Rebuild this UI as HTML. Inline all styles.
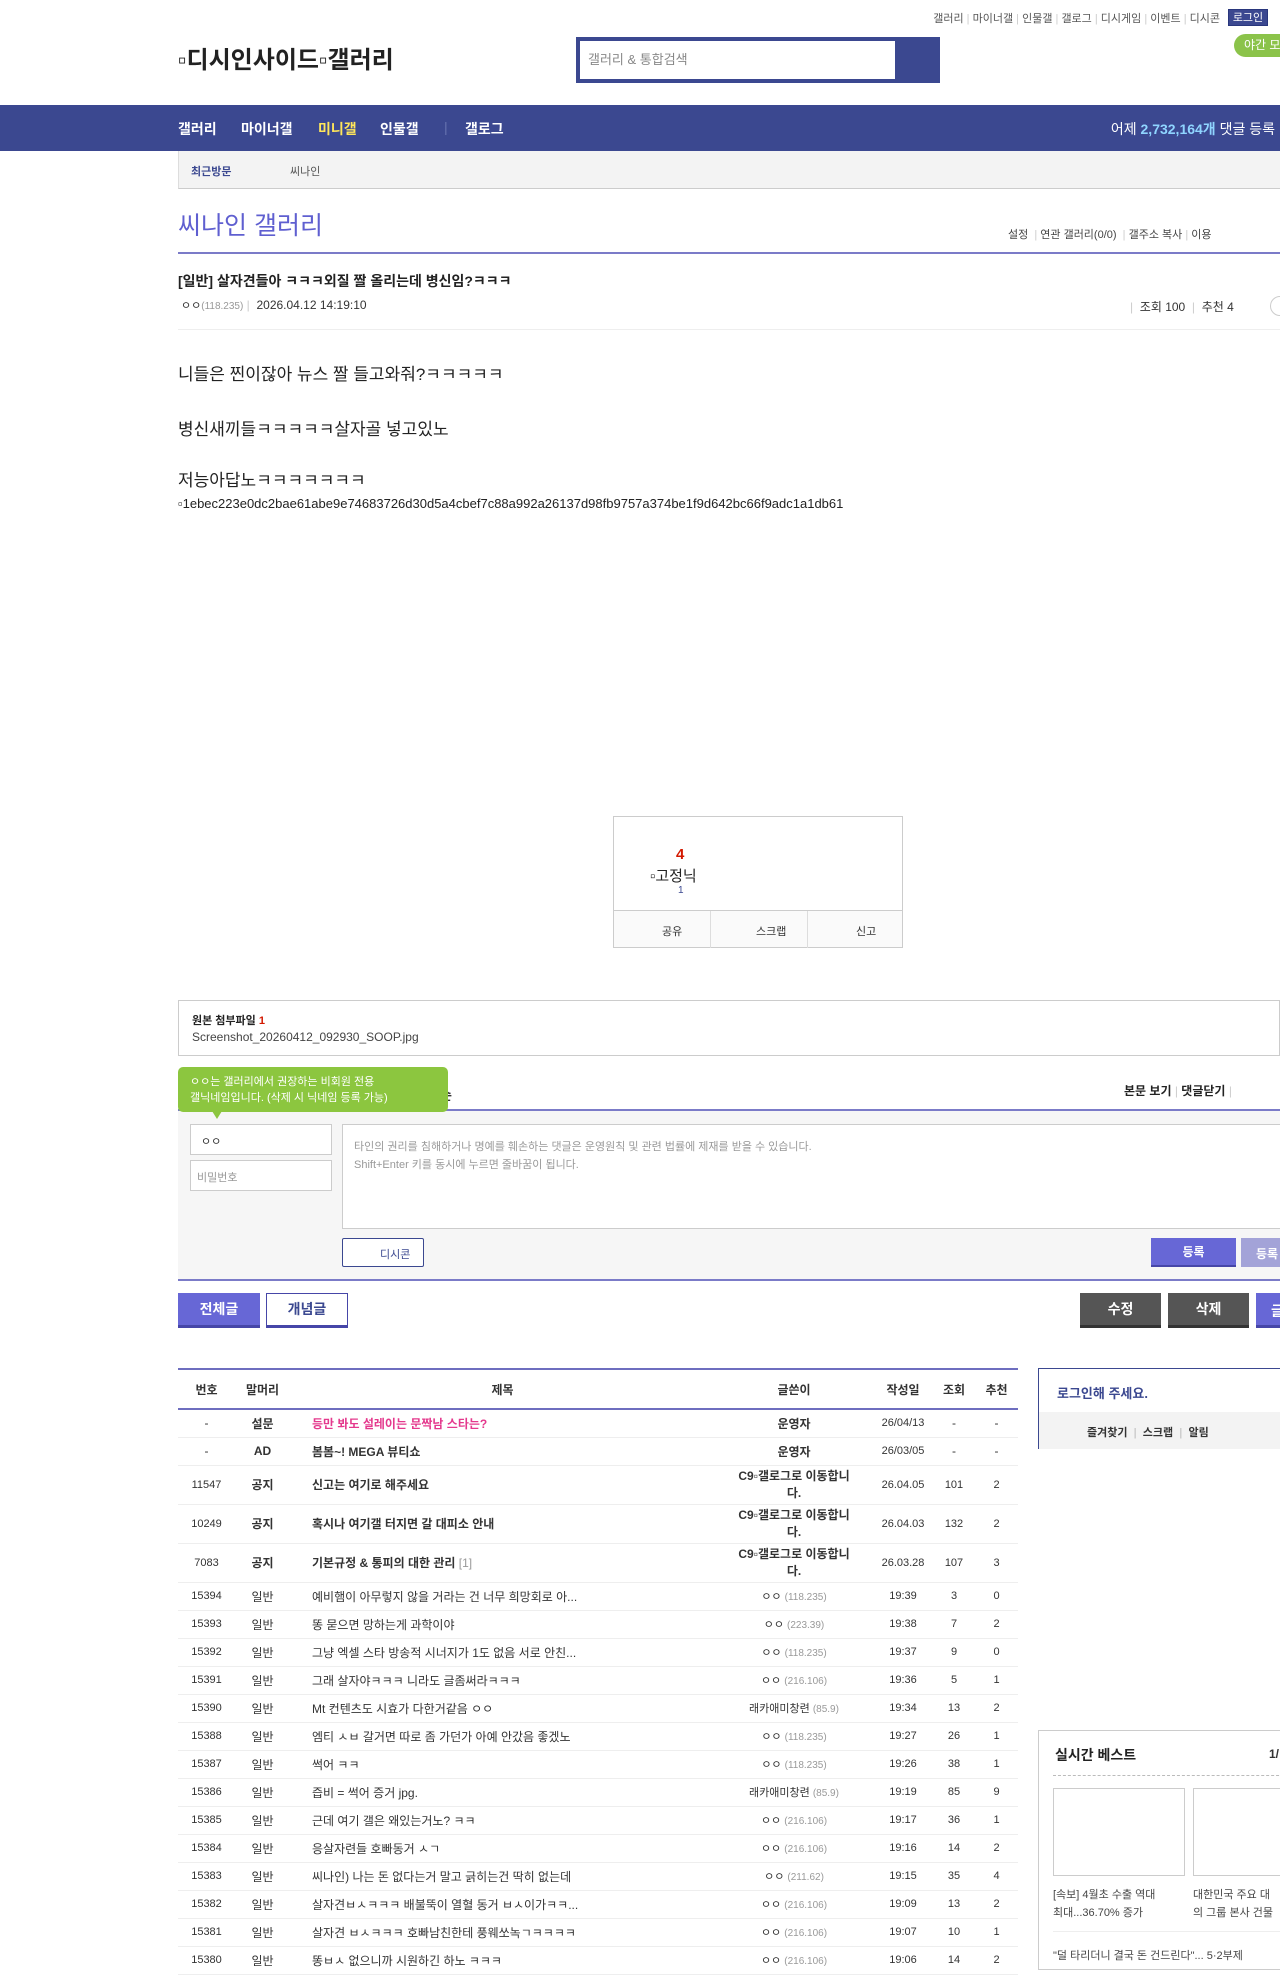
<!DOCTYPE html>
<html><head><meta charset="utf-8">
<style>
*{margin:0;padding:0;box-sizing:border-box}
body{width:1280px;height:1959px;overflow:hidden;background:#fff;font-family:"Liberation Sans","Noto Sans CJK KR",sans-serif;color:#333;position:relative;font-size:12px}
.a{position:absolute;white-space:nowrap}
.util{top:10px;right:60px;font-size:11px;color:#555}
.util i{font-style:normal;color:#ccc}
.login{top:9px;left:1228px;width:40px;height:17px;background:#3b4890;color:#fff;font-size:11px;text-align:center;line-height:17px;border:1px solid #29367c}
.night{top:34px;left:1234px;width:60px;height:23px;background:#8bc34a;border-radius:12px;color:#fff;font-size:12px;line-height:23px;padding-left:10px}
.logo{top:40px;left:178px;font-size:24px;font-weight:bold;color:#222}
.search{top:37px;left:576px;width:364px;height:46px;background:#3b4890}
.search div{position:absolute;left:4px;top:4px;width:315px;height:38px;background:#fff;color:#888;font-size:13px;line-height:38px;padding-left:8px}
.nav{top:105px;left:0;width:1280px;height:46px;background:#3b4890}
.nav span{position:absolute;top:14px;color:#fff;font-weight:bold;font-size:14px}
.sub{top:151px;left:178px;width:1102px;height:38px;background:#f3f3f3;border-bottom:1px solid #ccc;border-left:1px solid #ddd}
table{border-collapse:collapse;position:absolute;left:178px;top:1368px;width:840px;font-size:12px;table-layout:fixed}
td{text-align:center;border-bottom:1px solid #eee;height:28px;color:#333;overflow:hidden;white-space:nowrap}
td.t{text-align:left;padding-left:22px}
td.w{font-size:11px}
td.w small{color:#999;font-size:10px}
tr.n td{height:39px;font-weight:bold}
tr.n td.au{white-space:normal;line-height:17px;font-size:12px}
tr.h td{height:40px;font-weight:bold;border-bottom:2px solid #6e6ebf;border-top:2px solid #6e6ebf}
.b{font-weight:bold}
</style></head><body>
<div class="a util">갤러리<i> | </i>마이너갤<i> | </i>인물갤<i> | </i>갤로그<i> | </i>디시게임<i> | </i>이벤트<i> | </i>디시콘</div>
<div class="a login">로그인</div>
<div class="a night">야간 모드</div>
<div class="a logo">▫디시인사이드▫갤러리</div>
<div class="a search"><div>갤러리 &amp; 통합검색</div></div>
<div class="a nav">
<span style="left:178px">갤러리</span><span style="left:241px">마이너갤</span><span style="left:318px;color:#ffe65a">미니갤</span><span style="left:380px">인물갤</span><span style="left:444px;color:#6672b0;font-weight:normal">|</span><span style="left:465px">갤로그</span>
<span style="right:5px;font-weight:normal">어제 <b style="color:#8fd5ff">2,732,164개</b> 댓글 등록</span>
</div>
<div class="a sub"><span class="a" style="left:12px;top:12px;color:#3b4890;font-size:11px;font-weight:bold">최근방문</span><span class="a" style="left:111px;top:12px;font-size:11px;color:#555">씨나인</span></div>
<div class="a" style="top:206px;left:178px;font-size:25px;color:#5f5fd0">씨나인 갤러리</div>
<div class="a" style="top:226px;left:1008px;font-size:11px;color:#444">설정 &nbsp;<span style="color:#ccc">|</span> 연관 갤러리(0/0) &nbsp;<span style="color:#ccc">|</span> 갤주소 복사 <span style="color:#ccc">|</span> 이용</div>
<div class="a" style="top:252px;left:178px;width:1102px;height:2px;background:#7b7bc8"></div>
<div class="a b" style="top:271px;left:178px;font-size:14px;color:#222">[일반] 살자견들아 ㅋㅋㅋ외질 짤 올리는데 병신임?ㅋㅋㅋ</div>
<div class="a" style="top:297px;left:181px;font-size:12px"><span style="font-size:11px">ㅇㅇ</span><span style="color:#999;font-size:10px">(118.235)</span> <span style="color:#ccc">|</span> &nbsp;2026.04.12 14:19:10</div>
<div class="a" style="top:298px;left:1130px;font-size:12px"><span style="color:#ccc">|</span> &nbsp;조회 100 &nbsp;<span style="color:#ccc">|</span> &nbsp;추천 4</div>
<div class="a" style="top:296px;left:1270px;width:20px;height:20px;border:1px solid #ccc;border-radius:50%"></div>
<div class="a" style="top:329px;left:178px;width:1102px;height:1px;background:#eee"></div>
<div class="a" style="top:360px;left:178px;font-size:17px;color:#222">니들은 찐이잖아 뉴스 짤 들고와줘?ㅋㅋㅋㅋㅋ</div>
<div class="a" style="top:415px;left:178px;font-size:17px;color:#222">병신새끼들ㅋㅋㅋㅋㅋ살자골 넣고있노</div>
<div class="a" style="top:466px;left:178px;font-size:17px;color:#222">저능아답노ㅋㅋㅋㅋㅋㅋㅋ</div>
<div class="a" style="top:496px;left:178px;font-size:13px;color:#222">▫1ebec223e0dc2bae61abe9e74683726d30d5a4cbef7c88a992a26137d98fb9757a374be1f9d642bc66f9adc1a1db61</div>
<div class="a" style="top:816px;left:613px;width:290px;height:132px;border:1px solid #ccc">
<div class="a b" style="left:62px;top:29px;color:#d31900;font-size:15px">4</div>
<div class="a" style="left:36px;top:48px;font-size:15px;color:#222">▫고정닉</div>
<div class="a" style="left:64px;top:68px;font-size:10px;color:#3b4890">1</div>
<div class="a" style="left:0;top:93px;width:288px;height:37px;border-top:1px solid #ccc;background:#fafafa;font-size:11px">
<span class="a" style="left:48px;top:12px">공유</span><span class="a" style="left:96px;top:0;width:1px;height:37px;background:#ddd"></span>
<span class="a" style="left:142px;top:12px">스크랩</span><span class="a" style="left:193px;top:0;width:1px;height:37px;background:#ddd"></span>
<span class="a" style="left:242px;top:12px">신고</span></div></div>
<div class="a" style="top:1000px;left:178px;width:1102px;height:56px;border:1px solid #ccc">
<div class="a b" style="left:13px;top:11px;font-size:11px;color:#222">원본 첨부파일 <span style="color:#d31900">1</span></div>
<div class="a" style="left:13px;top:29px;font-size:12px;color:#444">Screenshot_20260412_092930_SOOP.jpg</div></div>
<div class="a" style="top:1085px;left:440px;font-size:13px;font-weight:bold">순</div>
<div class="a b" style="top:1082px;left:1124px;font-size:12px;color:#222">본문 보기 <span style="color:#ccc;font-weight:normal">|</span> 댓글닫기 <span style="color:#ccc;font-weight:normal">|</span></div>
<div class="a" style="top:1109px;left:178px;width:1102px;height:172px;background:#f6f6f6;border-top:2px solid #7b7bc8;border-bottom:2px solid #7b7bc8"></div>
<div class="a" style="top:1067px;left:178px;width:270px;height:45px;background:#8cc63f;border-radius:5px;color:#fff;font-size:11px;padding:7px 12px;line-height:16px">ㅇㅇ는 갤러리에서 권장하는 비회원 전용<br>갤닉네임입니다. (삭제 시 닉네임 등록 가능)</div>
<div class="a" style="top:1111px;left:212px;border:5px solid transparent;border-top:8px solid #8cc63f"></div>
<div class="a" style="top:1124px;left:190px;width:142px;height:31px;background:#fff;border:1px solid #ccc;font-size:11px;padding:8px 10px">ㅇㅇ</div>
<div class="a" style="top:1160px;left:190px;width:142px;height:31px;background:#fff;border:1px solid #ccc;font-size:11px;padding:8px 6px;color:#999">비밀번호</div>
<div class="a" style="top:1124px;left:342px;width:940px;height:105px;background:#fff;border:1px solid #ccc;font-size:11px;padding:13px 11px;color:#999;line-height:18px">타인의 권리를 침해하거나 명예를 훼손하는 댓글은 운영원칙 및 관련 법률에 제재를 받을 수 있습니다.<br>Shift+Enter 키를 동시에 누르면 줄바꿈이 됩니다.</div>
<div class="a" style="top:1238px;left:342px;width:82px;height:29px;background:#fff;border:1px solid #3b4890;border-radius:2px;font-size:11px;color:#3b4890;padding:7px 0 0 37px">디시콘</div>
<div class="a b" style="top:1238px;left:1151px;width:85px;height:29px;background:#6767d6;border-bottom:2px solid #4646a8;color:#fff;font-size:12px;text-align:center;line-height:28px">등록</div>
<div class="a b" style="top:1238px;left:1241px;width:60px;height:29px;background:#a3a3d8;color:#fff;font-size:12px;padding:7px 15px">등록</div>
<div class="a b" style="top:1293px;left:178px;width:82px;height:35px;background:#6767d6;border-bottom:3px solid #4646a8;color:#fff;font-size:14px;text-align:center;line-height:32px">전체글</div>
<div class="a b" style="top:1293px;left:266px;width:82px;height:35px;background:#fff;border:1px solid #4646a8;border-bottom:3px solid #4646a8;color:#3b4890;font-size:14px;text-align:center;line-height:30px">개념글</div>
<div class="a b" style="top:1293px;left:1080px;width:81px;height:35px;background:#555;border-bottom:3px solid #333;color:#fff;font-size:14px;text-align:center;line-height:32px">수정</div>
<div class="a b" style="top:1293px;left:1168px;width:81px;height:35px;background:#555;border-bottom:3px solid #333;color:#fff;font-size:14px;text-align:center;line-height:32px">삭제</div>
<div class="a b" style="top:1293px;left:1256px;width:60px;height:35px;background:#6767d6;border-bottom:3px solid #4646a8;color:#fff;font-size:14px;padding:8px 15px">글쓰기</div>
<table>
<colgroup><col style="width:57px"><col style="width:55px"><col style="width:425px"><col style="width:158px"><col style="width:60px"><col style="width:42px"><col style="width:43px"></colgroup>
<tr class="h"><td>번호</td><td>말머리</td><td>제목</td><td>글쓴이</td><td>작성일</td><td>조회</td><td>추천</td></tr>
<tr><td>-</td><td class="b">설문</td><td class="t b" style="color:#e4398d">등만 봐도 설레이는 문짝남 스타는?</td><td class="b">운영자</td><td class="w">26/04/13</td><td>-</td><td>-</td></tr>
<tr><td>-</td><td class="b">AD</td><td class="t b">봄봄~! MEGA 뷰티쇼</td><td class="b">운영자</td><td class="w">26/03/05</td><td>-</td><td>-</td></tr>
<tr class="n"><td class="w" style="font-weight:normal">11547</td><td>공지</td><td class="t">신고는 여기로 해주세요</td><td class="au">C9▫갤로그로 이동합니<br>다.</td><td class="w" style="font-weight:normal">26.04.05</td><td class="w" style="font-weight:normal">101</td><td class="w" style="font-weight:normal">2</td></tr>
<tr class="n"><td class="w" style="font-weight:normal">10249</td><td>공지</td><td class="t">혹시나 여기갤 터지면 갈 대피소 안내</td><td class="au">C9▫갤로그로 이동합니<br>다.</td><td class="w" style="font-weight:normal">26.04.03</td><td class="w" style="font-weight:normal">132</td><td class="w" style="font-weight:normal">2</td></tr>
<tr class="n"><td class="w" style="font-weight:normal">7083</td><td>공지</td><td class="t">기본규정 &amp; 통피의 대한 관리 <span style="color:#999;font-weight:normal">[1]</span></td><td class="au">C9▫갤로그로 이동합니<br>다.</td><td class="w" style="font-weight:normal">26.03.28</td><td class="w" style="font-weight:normal">107</td><td class="w" style="font-weight:normal">3</td></tr>
<tr><td class="w">15394</td><td>일반</td><td class="t">예비햄이 아무렇지 않을 거라는 건 너무 희망회로 아...</td><td class="w">ㅇㅇ <small>(118.235)</small></td><td class="w">19:39</td><td class="w">3</td><td class="w">0</td></tr>
<tr><td class="w">15393</td><td>일반</td><td class="t">똥 묻으면 망하는게 과학이야</td><td class="w">ㅇㅇ <small>(223.39)</small></td><td class="w">19:38</td><td class="w">7</td><td class="w">2</td></tr>
<tr><td class="w">15392</td><td>일반</td><td class="t">그냥 엑셀 스타 방송적 시너지가 1도 없음 서로 안친...</td><td class="w">ㅇㅇ <small>(118.235)</small></td><td class="w">19:37</td><td class="w">9</td><td class="w">0</td></tr>
<tr><td class="w">15391</td><td>일반</td><td class="t">그래 살자야ㅋㅋㅋ 니라도 글좀써라ㅋㅋㅋ</td><td class="w">ㅇㅇ <small>(216.106)</small></td><td class="w">19:36</td><td class="w">5</td><td class="w">1</td></tr>
<tr><td class="w">15390</td><td>일반</td><td class="t">Mt 컨텐츠도 시효가 다한거같음 ㅇㅇ</td><td class="w">래카애미창련 <small>(85.9)</small></td><td class="w">19:34</td><td class="w">13</td><td class="w">2</td></tr>
<tr><td class="w">15388</td><td>일반</td><td class="t">엠티 ㅅㅂ 갈거면 따로 좀 가던가 아예 안갔음 좋겠노</td><td class="w">ㅇㅇ <small>(118.235)</small></td><td class="w">19:27</td><td class="w">26</td><td class="w">1</td></tr>
<tr><td class="w">15387</td><td>일반</td><td class="t">썩어 ㅋㅋ</td><td class="w">ㅇㅇ <small>(118.235)</small></td><td class="w">19:26</td><td class="w">38</td><td class="w">1</td></tr>
<tr><td class="w">15386</td><td>일반</td><td class="t">즙비 = 썩어 증거 jpg.</td><td class="w">래카애미창련 <small>(85.9)</small></td><td class="w">19:19</td><td class="w">85</td><td class="w">9</td></tr>
<tr><td class="w">15385</td><td>일반</td><td class="t">근데 여기 갤은 왜있는거노? ㅋㅋ</td><td class="w">ㅇㅇ <small>(216.106)</small></td><td class="w">19:17</td><td class="w">36</td><td class="w">1</td></tr>
<tr><td class="w">15384</td><td>일반</td><td class="t">응살자련들 호빠동거 ㅅㄱ</td><td class="w">ㅇㅇ <small>(216.106)</small></td><td class="w">19:16</td><td class="w">14</td><td class="w">2</td></tr>
<tr><td class="w">15383</td><td>일반</td><td class="t">씨나인) 나는 돈 없다는거 말고 긁히는건 딱히 없는데</td><td class="w">ㅇㅇ <small>(211.62)</small></td><td class="w">19:15</td><td class="w">35</td><td class="w">4</td></tr>
<tr><td class="w">15382</td><td>일반</td><td class="t">살자견ㅂㅅㅋㅋㅋ 배불뚝이 열혈 동거 ㅂㅅ이가ㅋㅋ...</td><td class="w">ㅇㅇ <small>(216.106)</small></td><td class="w">19:09</td><td class="w">13</td><td class="w">2</td></tr>
<tr><td class="w">15381</td><td>일반</td><td class="t">살자견 ㅂㅅㅋㅋㅋ 호빠남친한테 풍웨쏘녹ㄱㅋㅋㅋㅋ</td><td class="w">ㅇㅇ <small>(216.106)</small></td><td class="w">19:07</td><td class="w">10</td><td class="w">1</td></tr>
<tr><td class="w">15380</td><td>일반</td><td class="t">똥ㅂㅅ 없으니까 시원하긴 하노 ㅋㅋㅋ</td><td class="w">ㅇㅇ <small>(216.106)</small></td><td class="w">19:06</td><td class="w">14</td><td class="w">2</td></tr>
</table>
<div class="a" style="top:1368px;left:1038px;width:250px;height:81px;border:1px solid #3b4890">
<div class="a b" style="left:18px;top:14px;font-size:13px;color:#3b4890">로그인해 주세요.</div>
<div class="a" style="left:0;top:43px;width:250px;height:37px;background:#f3f3f3;font-size:11px;font-weight:bold;padding:12px 0 0 48px">즐겨찾기 <span style="color:#ccc">&nbsp;|&nbsp;</span> 스크랩 <span style="color:#ccc">&nbsp;|&nbsp;</span> 알림</div></div>
<div class="a" style="top:1730px;left:1038px;width:250px;height:240px;border:1px solid #ccc">
<div class="a b" style="left:16px;top:14px;font-size:14px;color:#222">실시간 베스트</div>
<div class="a b" style="left:230px;top:16px;font-size:12px">1/</div>
<div class="a" style="left:14px;top:44px;width:236px;border-top:1px dashed #bbb"></div>
<div class="a" style="left:14px;top:57px;width:132px;height:88px;border:1px solid #ccc"></div>
<div class="a" style="left:154px;top:57px;width:100px;height:88px;border:1px solid #ccc"></div>
<div class="a" style="left:14px;top:155px;font-size:11px;line-height:18px;color:#444">[속보] 4월초 수출 역대<br>최대...36.70% 증가</div>
<div class="a" style="left:154px;top:155px;font-size:11px;line-height:18px;color:#444">대한민국 주요 대<br>의 그룹 본사 건물</div>
<div class="a" style="left:14px;top:200px;width:236px;border-top:1px solid #eee"></div>
<div class="a" style="left:14px;top:216px;font-size:11px;color:#444">"덜 타리더니 결국 돈 건드린다"... 5·2부제</div></div>
</body></html>
